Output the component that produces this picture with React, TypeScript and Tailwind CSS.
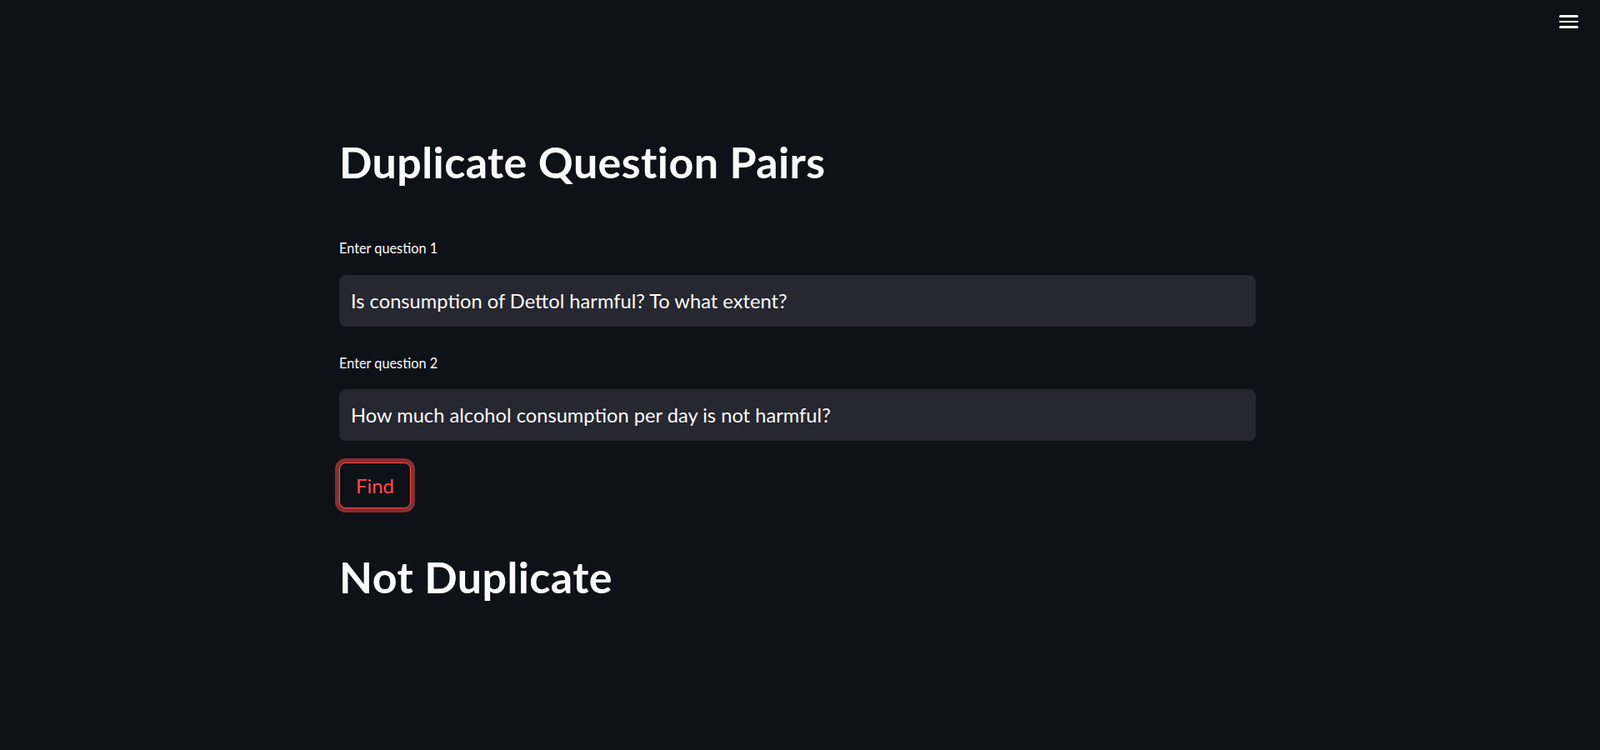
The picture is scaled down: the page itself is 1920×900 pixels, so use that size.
import React from "react";

const font = { fontFamily: "Lato, 'Open Sans', 'Liberation Sans', sans-serif" };

const questions = [
  { label: "Enter question 1", value: "Is consumption of Dettol harmful? To what extent?" },
  { label: "Enter question 2", value: "How much alcohol consumption per day is not harmful?" },
];

const App = () => {
  return (
    <div className="relative min-h-[900px] w-full bg-[#0e1117] text-[#fafafa]" style={font}>
      {/* menu button */}
      <button className="absolute right-[26px] top-[18px] flex flex-col gap-[4px]">
        <span className="block h-[2.5px] w-[23px] rounded-sm bg-[#fafafa]" />
        <span className="block h-[2.5px] w-[23px] rounded-sm bg-[#fafafa]" />
        <span className="block h-[2.5px] w-[23px] rounded-sm bg-[#fafafa]" />
      </button>

      <div className="mx-auto flex w-[1106px] flex-col pr-[6px] pt-[163px]">
        <h1 className="text-[52px] font-bold leading-[1.2] tracking-[0.4px]">
          Duplicate Question Pairs
        </h1>

        {questions.map((q, i) => (
          <div key={i} className={i === 0 ? "mt-[63px]" : "mt-[34px]"}>
            <label className="block text-[16.3px] leading-[1.2]">{q.label}</label>
            <input
              readOnly
              value={q.value}
              className="mt-[22px] block h-[62px] w-full rounded-[8px] border border-[#262730] bg-[#262730] pl-[13px] text-[23.7px] text-[#fafafa] outline-none"
              style={font}
            />
          </div>
        ))}

        <div className="mt-[26px]">
          <button
            className="flex h-[55px] w-[86px] items-center justify-center rounded-[8px] border border-[#ff4b4b] bg-[#0e1117] text-[24px] text-[#ff4b4b] shadow-[0_0_0_5px_rgba(255,75,75,0.5)]"
            style={font}
          >
            Find
          </button>
        </div>

        <h2 className="mt-[51px] text-[52px] font-bold leading-[1.2] tracking-[0.4px]">
          Not Duplicate
        </h2>
      </div>
    </div>
  );
};

export default App;
